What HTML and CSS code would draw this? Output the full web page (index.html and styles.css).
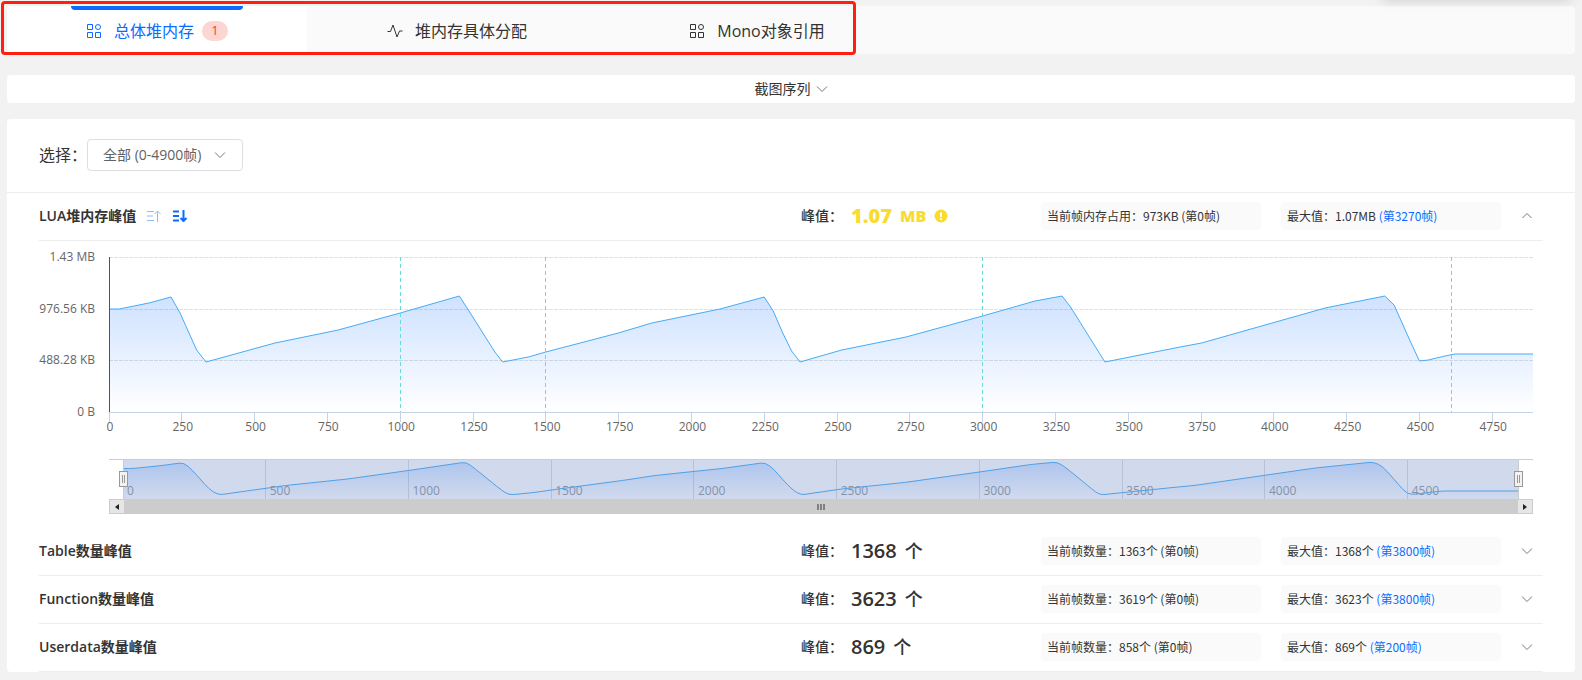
FILE: index.html
```html
<!DOCTYPE html>
<html lang="zh-CN">
<head>
<meta charset="utf-8">
<meta name="viewport" content="width=device-width, initial-scale=1">
<title>总体堆内存</title>
<link rel="stylesheet" href="styles.css">
</head>
<body>
<svg class="defs" aria-hidden="true">
  <symbol id="icon-grid" viewBox="0 0 16 16"><path d="M1.5 1.5h5v5h-5zM1.5 9.5h5v5h-5zM9.5 9.5h5v5h-5z"/><circle cx="12" cy="4" r="2.5"/></symbol>
  <symbol id="icon-pulse" viewBox="0 0 16 16"><path d="M0.500 8.500h3L6 2l4 12 2.500-6h3"/></symbol>
  <symbol id="icon-down" viewBox="0 0 12 12"><path d="M1 3.500l5 5 5-5"/></symbol>
  <symbol id="icon-up" viewBox="0 0 12 12"><path d="M1.500 8l4.500-4.500L10.500 8"/></symbol>
</svg>
<div class="shade"></div>
<nav class="tabs">
  <button class="tab tab-active" type="button"><svg class="tab-icon"><use href="#icon-grid"/></svg><span>总体堆内存</span><span class="badge">1</span></button>
  <button class="tab" type="button"><svg class="tab-icon"><use href="#icon-pulse"/></svg><span>堆内存具体分配</span></button>
  <button class="tab" type="button"><svg class="tab-icon"><use href="#icon-grid"/></svg><span>Mono对象引用</span></button>
  <div class="marker"></div>
</nav>
<button class="sequence" type="button">截图序列<svg class="chevron"><use href="#icon-down"/></svg></button>
<main class="card">
  <div class="filter">
    <label for="range">选择：</label>
    <div class="select-wrap">
      <select id="range" class="select"><option>全部 (0-4900帧)</option></select>
      <svg class="chevron select-arrow"><use href="#icon-down"/></svg>
    </div>
  </div>
  <div class="content">
    <section class="row">
      <h2 class="name">LUA堆内存峰值
        <button class="sort sort-off" type="button" aria-label="升序"><svg viewBox="0 0 16 12"><path d="M1 1.500h7M1 6h6M1 10.500h7M11.500 12V1M8.500 4l3-3 3 3"/></svg></button>
        <button class="sort" type="button" aria-label="降序"><svg viewBox="0 0 16 12"><path d="M1 1.500h6M1 6h6M1 10.500h6M11.500 0v10.500M8.500 8l3 3 3-3"/></svg></button>
      </h2>
      <div class="peak peak-warn"><span class="peak-label">峰值：</span><strong>1.07</strong><b>MB</b><svg class="warn" viewBox="0 0 14 14"><circle cx="7" cy="7" r="6.500"/><path d="M7 3.500v4.200M7 9.300v1.700"/></svg></div>
      <div class="stat">当前帧内存占用：973KB (第0帧)</div>
      <div class="stat">最大值：1.07MB <a href="#3270">(第3270帧)</a></div>
      <button class="toggle" type="button" aria-label="收起"><svg class="chevron"><use href="#icon-up"/></svg></button>
    </section>
    <div class="chart">
      <div class="y-axis"><span>1.43 MB</span><span>976.56 KB</span><span>488.28 KB</span><span>0 B</span></div>
      <div class="plots">
        <svg class="plot" id="plot"></svg>
        <svg class="navigator" id="navigator"></svg>
        <div class="scrollbar">
          <button class="scroll-end" type="button" aria-label="向左"><svg viewBox="0 0 4 6"><path d="M4 0v6L0 3z"/></svg></button>
          <div class="thumb"><i></i><i></i><i></i></div>
          <button class="scroll-end" type="button" aria-label="向右"><svg viewBox="0 0 4 6"><path d="M0 0v6l4-3z"/></svg></button>
        </div>
      </div>
    </div>
    <section class="row">
      <h2 class="name">Table数量峰值</h2>
      <div class="peak"><span class="peak-label">峰值：</span><strong>1368</strong><b>个</b></div>
      <div class="stat">当前帧数量：1363个 (第0帧)</div>
      <div class="stat">最大值：1368个 <a href="#3800">(第3800帧)</a></div>
      <button class="toggle" type="button" aria-label="展开"><svg class="chevron"><use href="#icon-down"/></svg></button>
    </section>
    <section class="row">
      <h2 class="name">Function数量峰值</h2>
      <div class="peak"><span class="peak-label">峰值：</span><strong>3623</strong><b>个</b></div>
      <div class="stat">当前帧数量：3619个 (第0帧)</div>
      <div class="stat">最大值：3623个 <a href="#3800">(第3800帧)</a></div>
      <button class="toggle" type="button" aria-label="展开"><svg class="chevron"><use href="#icon-down"/></svg></button>
    </section>
    <section class="row">
      <h2 class="name">Userdata数量峰值</h2>
      <div class="peak"><span class="peak-label">峰值：</span><strong>869</strong><b>个</b></div>
      <div class="stat">当前帧数量：858个 (第0帧)</div>
      <div class="stat">最大值：869个 <a href="#200">(第200帧)</a></div>
      <button class="toggle" type="button" aria-label="展开"><svg class="chevron"><use href="#icon-down"/></svg></button>
    </section>
  </div>
</main>
<script src="chart.js"></script>
</body>
</html>
```

FILE: styles.css
```css
* { box-sizing: border-box; }
body {
  margin: 0;
  padding: 6px 7px 8px;
  background: #f2f2f2;
  color: #333;
  font: 14px/20px "Open Sans", "Noto Sans CJK SC", sans-serif;
}
button { margin: 0; padding: 0; border: 0; background: none; color: inherit; font: inherit; cursor: pointer; }
svg { display: block; fill: none; stroke: currentColor; }
a { color: #0a6cff; text-decoration: none; }
.defs { position: absolute; width: 0; height: 0; }
.shade {
  position: absolute; top: -10px; right: 10px; z-index: 2;
  width: 190px; height: 10px; border-radius: 4px;
  box-shadow: 0 0 12px rgba(0, 0, 0, 0.16);
}

.tabs { position: relative; display: flex; height: 48px; background: #fafafa; border-radius: 4px; }
.tab {
  position: relative;
  display: flex; align-items: center; justify-content: center;
  width: 300px; padding-top: 1px; font-size: 16px; line-height: 24px;
}
.tab-icon { width: 16px; height: 16px; margin-right: 12px; }
.tab-active { background: #fff; color: #0a6cff; border-radius: 4px 0 0 4px; }
.tab-active::before {
  content: ""; position: absolute; top: 0; left: 64px; right: 64px;
  height: 4px; background: #0a6cff; border-radius: 0 0 4px 4px;
}
.badge {
  width: 26px; height: 20px; margin-left: 8px; border-radius: 10px;
  background: #fdd5d2; color: #ff3322; font-size: 12px; line-height: 20px;
}
.marker {
  position: absolute; top: -5px; left: -6px; z-index: 1;
  width: 855px; height: 54px; border: 3px solid #ff1e10; border-radius: 4px;
  pointer-events: none;
}

.sequence {
  display: flex; align-items: center; justify-content: center; gap: 5px;
  width: 100%; height: 28px; margin: 21px 0 16px;
  background: #fff; border-radius: 4px;
}
.chevron { width: 12px; height: 12px; color: #777; }

.card { background: #fff; border-radius: 4px; overflow: hidden; }
.filter {
  display: flex; align-items: center;
  height: 74px; padding: 0 32px 2px; border-bottom: 1px solid #ededed;
  font-size: 16px;
}
.select-wrap { position: relative; }
.select {
  display: block;
  width: 156px; height: 32px; padding: 0 30px 0 15px;
  appearance: none; border: 1px solid #dcdee2; border-radius: 4px;
  background: #fff; color: #606266;
  font: 14px/20px "Open Sans", "Noto Sans CJK SC", sans-serif;
}
.select-arrow { position: absolute; right: 17px; top: 10px; pointer-events: none; }

.content { padding: 0 32px; }
.row {
  display: grid; grid-template-columns: 1fr 220px 220px 220px 22px;
  column-gap: 20px; align-items: center;
  height: 48px; padding-bottom: 1px; border-bottom: 1px solid #ededed;
}
.name { display: flex; align-items: center; margin: 0; font-size: 14px; font-weight: 600; }
.sort { margin-left: 10px; color: #0a6cff; stroke-width: 2; }
.sort svg { width: 16px; height: 12px; }
.sort-off { color: #8dbcff; stroke-width: 1; }
.peak { display: flex; align-items: center; font-weight: 600; }
.peak-label { width: 50px; font-weight: 500; }
.peak strong { font-size: 20px; font-weight: 600; }
.peak b { margin-left: 8px; font-size: 18px; font-weight: 500; }
.peak-warn strong, .peak-warn b { color: #fadb2f; font-weight: 800; }
.peak-warn b { font-size: 16px; }
.warn { width: 14px; height: 14px; margin-left: 8px; fill: #fadb2f; stroke: none; }
.warn path { stroke: #fff; stroke-width: 2; }
.stat {
  height: 28px; padding: 0 6px; border-radius: 4px;
  background: #fafafa; font: 12px/28px "Noto Sans CJK SC", sans-serif; white-space: nowrap;
}
.toggle { display: flex; }

.chart { display: flex; gap: 14px; padding: 8px 10px 14px 0; }
.y-axis {
  display: flex; flex-direction: column; justify-content: space-between;
  width: 56px; height: 171px;
  color: #666; font-size: 12px; line-height: 16px; text-align: right; white-space: nowrap;
}
.plots { flex: 1; padding-top: 8px; }
.plot { width: 100%; height: 202px; overflow: visible; }
.navigator { width: 100%; height: 40px; overflow: visible; }
.plot text, .navigator text { fill: #666; stroke: none; font-size: 12px; }
.plot text { text-anchor: middle; }
.navigator .nav-text { fill: #999; }
.stop-top { stop-color: #0a6cff; stop-opacity: 0.2; }
.stop-bottom { stop-color: #0a6cff; stop-opacity: 0; }
.area { fill: url(#fade); stroke: none; }
.curve { stroke: #45acf7; stroke-width: 1; vector-effect: non-scaling-stroke; }
.grid-line { stroke: #dfe0e2; stroke-dasharray: 4 1; }
.frame-line { stroke: #6adcd8; stroke-dasharray: 4 3; shape-rendering: crispEdges; }
.axis-line { stroke: #c3d3ea; shape-rendering: crispEdges; }
.y-line { stroke: #0a5ce0; }
.nav-line { stroke: #dcdcdc; shape-rendering: crispEdges; }
.nav-outline { stroke: #ccc; }
.mask { fill: rgba(102, 133, 194, 0.3); stroke: none; }
.handle { fill: #f2f2f2; stroke: #999; }

.scrollbar { display: flex; height: 15px; background: #ccc; border: 1px solid #ccc; }
.scroll-end { display: flex; align-items: center; justify-content: center; width: 14px; background: #e6e6e6; }
.scroll-end svg { width: 4px; height: 6px; fill: #222; stroke: none; }
.thumb { flex: 1; display: flex; align-items: center; justify-content: center; gap: 1px; }
.thumb i { width: 2px; height: 6px; background: #808080; }
```

FILE: chart.js
```js
const LAST = 4890;
const HEIGHT = 155;
// Each sample is [frame, distance below the top of the plot].
const samples = [
  [0, 52], [35, 52], [137, 46], [213, 40], [244, 56], [301, 93], [333, 105], [433, 97],
  [570, 86], [787, 73], [1000, 56], [1203, 39], [1234, 53], [1325, 95], [1352, 105],
  [1440, 100], [1500, 95], [1749, 76], [1864, 66], [2098, 52], [2250, 40], [2281, 54],
  [2312, 75], [2344, 94], [2373, 105], [2516, 93], [2737, 80], [3000, 59], [3180, 44],
  [3273, 39], [3302, 50], [3392, 92], [3420, 105], [3678, 90], [3752, 86], [4176, 51],
  [4381, 39], [4413, 48], [4468, 84], [4500, 104], [4530, 103], [4588, 99], [4622, 97], [4890, 97]
];
const pct = frame => frame / LAST * 100 + '%';
const line = (cls, x1, y1, x2, y2) => `<line class="${cls}" x1="${x1}" y1="${y1}" x2="${x2}" y2="${y2}"/>`;

function curve(points, radius) {
  let d = 'M' + points[0];
  for (let i = 1; i < points.length - 1; i++) {
    const p = points[i];
    const ends = [points[i - 1], points[i + 1]].map(q => {
      const t = Math.min(0.5, radius / Math.abs(q[0] - p[0]));
      return [p[0] + (q[0] - p[0]) * t, p[1] + (q[1] - p[1]) * t];
    });
    d += 'L' + ends[0] + 'Q' + p + ' ' + ends[1];
  }
  return d + 'L' + points[points.length - 1];
}

function series(d, height) {
  return `<path class="area" d="${d}V${height}H0Z"/><path class="curve" d="${d}"/>`;
}

let plot = '<defs><linearGradient id="fade" x1="0" y1="0" x2="0" y2="1"><stop class="stop-top"/><stop class="stop-bottom" offset="1"/></linearGradient></defs>';
for (const y of [0.5, 52.5, 103.5]) plot += line('grid-line', 0, y, '100%', y);
plot += `<svg width="100%" height="${HEIGHT}" viewBox="0 0 ${LAST} ${HEIGHT}" preserveAspectRatio="none">${series(curve(samples, 0), HEIGHT)}</svg>`;
for (const f of [1000, 1500, 3000, 4610]) plot += line('frame-line', pct(f), 0, pct(f), HEIGHT);
plot += line('axis-line', 0, 155.5, '100%', 155.5);
for (let f = 0; f < LAST; f += 250) {
  plot += line('axis-line', pct(f), 156, pct(f), 165);
  plot += `<text x="${pct(f)}" dx="1" y="174">${f}</text>`;
}
plot += line('y-line', 0.5, 0, 0.5, HEIGHT);
document.getElementById('plot').innerHTML = plot;

const navigator_ = document.getElementById('navigator');
function drawNavigator() {
  const width = navigator_.clientWidth || navigator_.getBoundingClientRect().width;
  const inner = width - 28;
  let grid = '';
  for (let f = 0; f < LAST; f += 500) {
    const x = f / LAST * inner;
    if (f) grid += line('nav-line', x, 0, x, 40);
    grid += `<text class="nav-text" x="${x + 4}" y="36">${f}</text>`;
  }
  const points = samples.map(([f, y]) => [f, 3 + (y - 39) / 2]);
  const handle = x => `<rect class="handle" x="${x - 4}" y="12.5" width="8" height="15"/><path class="handle" d="M${x - 1} 16v8M${x + 1} 16v8"/>`;
  navigator_.innerHTML =
    `<svg x="14" width="${inner}" height="40">${grid}` +
    `<svg width="100%" height="40" viewBox="0 0 ${LAST} 40" preserveAspectRatio="none">${series(curve(points, 16), 40)}</svg>` +
    `<rect class="mask" width="100%" height="40"/></svg>` +
    `<path class="nav-outline" d="M0 0.5H${width}M14.5 0V40M${width - 14.5} 0V40"/>` +
    handle(14.5) + handle(width - 14.5);
}
drawNavigator();
window.addEventListener('resize', drawNavigator);
```
